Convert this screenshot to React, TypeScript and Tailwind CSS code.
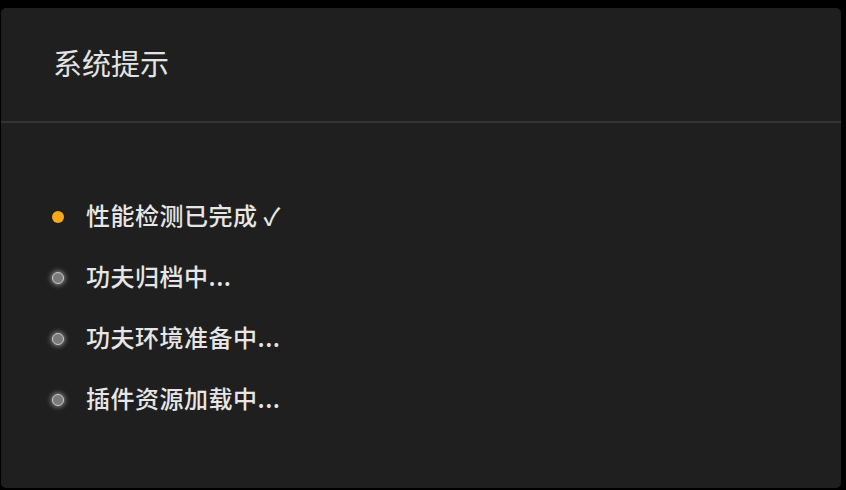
const steps = [
  { label: '性能检测已完成 ✓', done: true },
  { label: '功夫归档中...', done: false },
  { label: '功夫环境准备中...', done: false },
  { label: '插件资源加载中...', done: false },
];

export default function App() {
  return (
    <div
      className="h-[490px] w-[846px] bg-black pl-px pt-2"
      style={{ fontFamily: '"Noto Sans CJK SC", "Noto Sans", sans-serif' }}
    >
      <div className="flex h-[480px] w-[840px] flex-col rounded-[5px] bg-[#1f1f1f]">
        <div className="flex h-[115px] items-center border-b-2 border-[#333333] pb-1 pl-[52px]">
          <h1 className="text-[29px] font-normal leading-none text-[#e3e3e3]">系统提示</h1>
        </div>
        <ul className="flex flex-col gap-[37px] pl-[51px] pt-[82px]">
          {steps.map((s) => (
            <li key={s.label} className="flex h-6 items-center gap-[22px]">
              {s.done ? (
                <span className="h-3 w-3 shrink-0 rounded-full bg-[#f8a81a]" />
              ) : (
                <span className="h-3 w-3 shrink-0 rounded-full border border-[#c9c9c9] bg-[#7a7a7a] shadow-[0_0_5px_1px_rgba(255,255,255,0.5)]" />
              )}
              <span className="-mt-1 text-[24px] font-medium leading-none tracking-[0.5px] text-[#e6e6e6]">
                {s.label}
              </span>
            </li>
          ))}
        </ul>
      </div>
    </div>
  );
}
